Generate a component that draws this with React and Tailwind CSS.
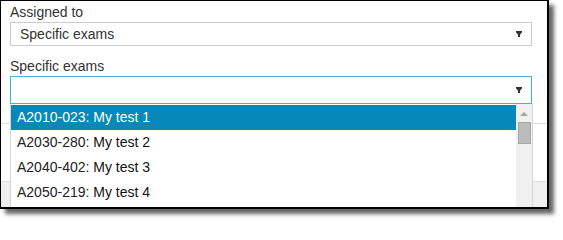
const Caret = () => (
  <svg width="6" height="6" viewBox="0 0 6 6" className="shrink-0">
    <path d="M0 0h6v1.6L4 3.4V6H2V3.4L0 1.6Z" fill="#333" />
  </svg>
);

const items = [
  { code: "A2010-023:", name: "My test 1" },
  { code: "A2030-280:", name: "My test 2" },
  { code: "A2040-402:", name: "My test 3" },
  { code: "A2050-219:", name: "My test 4" },
];

export default function App() {
  return (
    <div className="w-[563px] h-[224px] bg-white font-['Liberation_Sans',Arial,sans-serif] text-[14px] text-[#333]">
      <div className="relative w-[549px] h-[209px] border-l border-t border-r-2 border-b-2 border-black bg-white overflow-hidden shadow-[5px_5px_4px_rgba(0,0,0,0.6)]">
        <div className="flex flex-col h-full">
          <div className="pl-[9px] pt-[2px]">
            <div className="leading-[18px] h-[18px]">Assigned to</div>
            <div className="mt-px w-[522px] h-[24px] border border-[#cccccc] flex items-center justify-between pl-[9px] pr-[9px]">
              <span className="leading-[18px]">Specific exams</span>
              <Caret />
            </div>
            <div className="mt-[11px] leading-[18px] h-[18px]">Specific exams</div>
            <div className="mt-px w-[522px] h-[28px] border border-[#45b0dc] flex items-center justify-end pr-[9px]">
              <Caret />
            </div>
          </div>
          <div className="h-[20px] border-b border-[#dddddd]"></div>
          <div className="flex-1"></div>
          <div className="h-[26px] border-t border-[#dddddd] bg-[#f0f0f0]"></div>
        </div>

        <div className="absolute left-[9px] top-[103px] bottom-0 w-[523px] bg-white border-l border-r border-[#d4d4d4] pt-px flex">
          <ul className="flex-1">
            {items.map((it, i) => (
              <li
                key={it.code}
                className={
                  "h-[25px] leading-[25px] pl-[6px] whitespace-nowrap " +
                  (i === 0 ? "bg-[#0689b9] text-white" : "text-[#222]")
                }
              >
                {it.code} <span className={i === 0 ? "text-white" : "text-[#111]"}>{it.name}</span>
              </li>
            ))}
          </ul>
          <div className="w-[16px] -mt-px bg-[#f0f0f0] flex flex-col items-center">
            <svg width="8" height="4" viewBox="0 0 8 4" className="mt-[8px]">
              <path d="M0 4L4 0L8 4Z" fill="#a3a3a3" />
            </svg>
            <div className="mt-[6px] w-[13px] h-[22px] bg-[#bcbcbc] border border-[#a6a6a6]"></div>
          </div>
        </div>
      </div>
    </div>
  );
}
